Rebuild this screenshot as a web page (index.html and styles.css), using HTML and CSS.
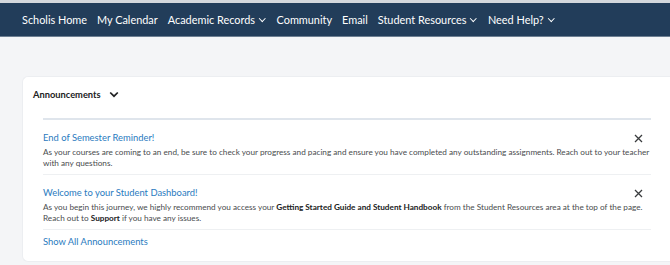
FILE: index.html
```html
<!DOCTYPE html>
<html>
<head>
  <meta charset="UTF-8">
  <title>Homepage | Scholis</title>
  <link rel="stylesheet" href="styles.css">
</head>
<body>
  <div class="strip"></div>
  <nav>
    <ul>
      <li><a href="#">Scholis Home</a></li>
      <li><a href="#">My Calendar</a></li>
      <li><a href="#">Academic Records <span class="caret"></span></a></li>
      <li><a href="#">Community</a></li>
      <li><a href="#">Email</a></li>
      <li><a href="#">Student Resources <span class="caret"></span></a></li>
      <li><a href="#">Need Help? <span class="caret"></span></a></li>
    </ul>
  </nav>
  <div class="page">
    <div class="widget">
      <div class="widget-head">
        <h2>Announcements</h2>
        <svg class="chev" width="10" height="7" viewBox="0 0 10 7"><path d="M1.2 1.5 L5 5.2 L8.8 1.5" fill="none" stroke="#202122" stroke-width="1.7"/></svg>
      </div>
      <div class="list">
        <div class="item">
          <div class="item-top">
            <a class="title" href="#">End of Semester Reminder!</a>
            <svg class="close" width="9" height="9" viewBox="0 0 9 9"><path d="M1 1 L8 8 M8 1 L1 8" stroke="#3a3c3e" stroke-width="1.3"/></svg>
          </div>
          <p>As your courses are coming to an end, be sure to check your progress and pacing and ensure you have completed any outstanding assignments. Reach out to your teacher with any questions.</p>
        </div>
        <div class="item">
          <div class="item-top">
            <a class="title" href="#">Welcome to your Student Dashboard!</a>
            <svg class="close" width="9" height="9" viewBox="0 0 9 9"><path d="M1 1 L8 8 M8 1 L1 8" stroke="#3a3c3e" stroke-width="1.3"/></svg>
          </div>
          <p>As you begin this journey, we highly recommend you access your <b>Getting Started Guide and Student Handbook</b> from the Student Resources area at the top of the page. Reach out to <b>Support</b> if you have any issues.</p>
        </div>
        <a class="show-all" href="#">Show All Announcements</a>
      </div>
    </div>
  </div>
</body>
</html>
```

FILE: styles.css
```css
body {
  margin: 0;
  padding: 0;
  font-family: Lato, "Liberation Sans", sans-serif;
  background: #f4f5f7;
  color: #494c4e;
  overflow: hidden;
}
.strip {
  height: 3px;
  background: #d3d7dc;
}
nav {
  background: #223d5a;
  height: 33px;
  border-bottom: 1px solid #6d7f92;
}
nav ul {
  list-style: none;
  margin: 0;
  padding: 0 0 0 22px;
  display: flex;
  align-items: center;
  height: 100%;
}
nav ul li {
  margin-right: 10px;
}
nav ul li a {
  color: #fff;
  text-decoration: none;
  font-size: 10.9px;
  display: flex;
  align-items: center;
}
.caret {
  display: inline-block;
  width: 3.5px;
  height: 3.5px;
  border-right: 1.3px solid #fff;
  border-bottom: 1.3px solid #fff;
  transform: rotate(45deg);
  margin: -3px 2px 0 5px;
}
.page {
  padding: 39px 0 0 22px;
}
.widget {
  background: #fff;
  border-radius: 6px 0 0 6px;
  border: 1px solid #eceef1;
  border-right: none;
  height: 184px;
}
.widget-head {
  display: flex;
  align-items: center;
  padding: 9px 0 0 10px;
  height: 17px;
}
.widget-head h2 {
  font-size: 9.3px;
  font-weight: 700;
  color: #202122;
  margin: 0 8px 0 0;
}
.list {
  margin: 15px 19px 0 20px;
  border-top: 2px solid #dfe5ec;
}
.item {
  border-bottom: 1px solid #eef0f2;
  padding: 12px 0 5px 0;
}
.item-top {
  display: flex;
  justify-content: space-between;
  align-items: center;
  height: 12px;
}
.title, .show-all {
  color: #2a7bc0;
  font-size: 9.4px;
  line-height: 12px;
  text-decoration: none;
}
.close {
  margin-right: 8px;
}
.item p {
  margin: 3px 0 0 0;
  font-size: 8.2px;
  line-height: 11px;
}
.item p b {
  color: #202122;
}
.show-all {
  display: block;
  margin-top: 6px;
}
```
